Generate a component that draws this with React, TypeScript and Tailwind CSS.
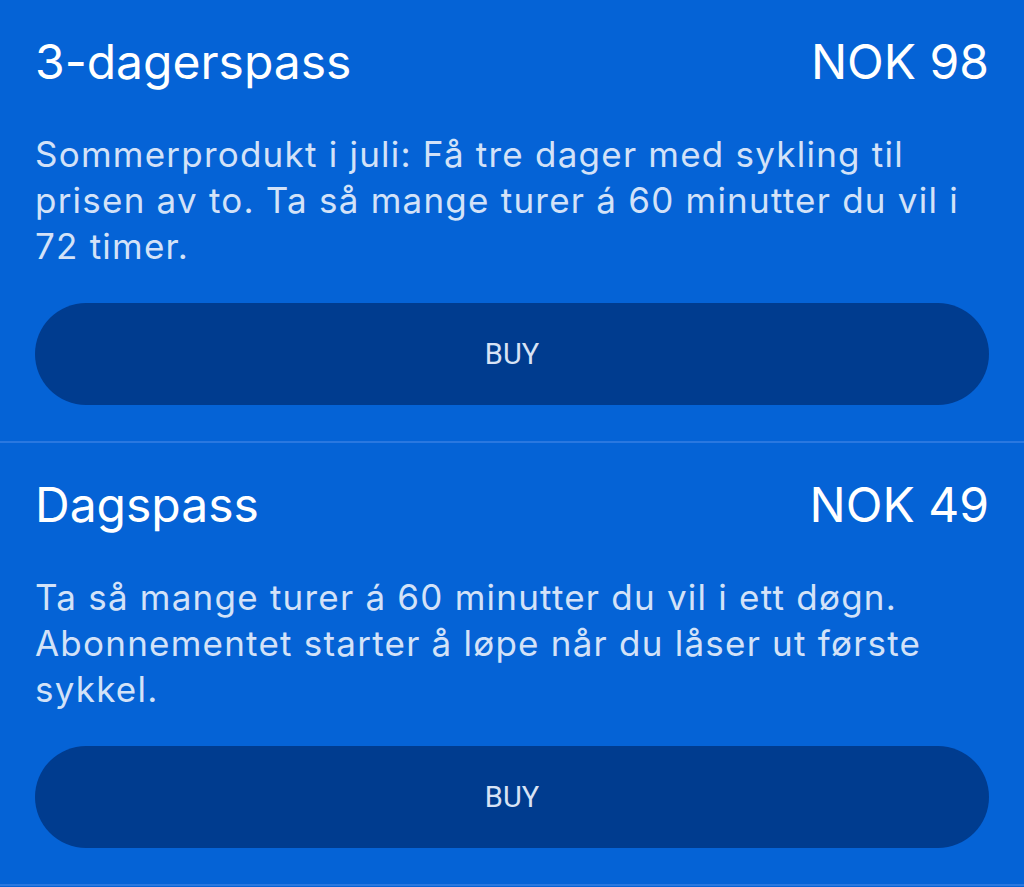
const passes = [
  {
    name: '3-dagerspass',
    price: 'NOK 98',
    description:
      'Sommerprodukt i juli: Få tre dager med sykling til prisen av to. Ta så mange turer á 60 minutter du vil i 72 timer.',
  },
  {
    name: 'Dagspass',
    price: 'NOK 49',
    description:
      'Ta så mange turer á 60 minutter du vil i ett døgn. Abonnementet starter å løpe når du låser ut første sykkel.',
  },
];

export default function App() {
  return (
    <div className="min-h-screen bg-[#0563d6] font-['Inter',sans-serif]">
      {passes.map((pass) => (
        <section key={pass.name} className="border-b-2 border-[#2a78e0] px-[35px] pt-[30px] pb-[36px]">
          <div className="flex items-baseline justify-between">
            <h2 className="text-[48px] leading-[64px] text-white">{pass.name}</h2>
            <span className="text-[48px] leading-[64px] text-white">{pass.price}</span>
          </div>
          <p className="mt-[37px] text-[35px] leading-[46px] tracking-[0.035em] text-[#d3e2f8]">{pass.description}</p>
          <button className="mt-[34px] flex h-[102px] w-full items-center justify-center rounded-full bg-[#003c8f] pt-[2px] font-['Roboto',sans-serif] text-[29px] text-[#d7e3f5]">
            BUY
          </button>
        </section>
      ))}
    </div>
  );
}
